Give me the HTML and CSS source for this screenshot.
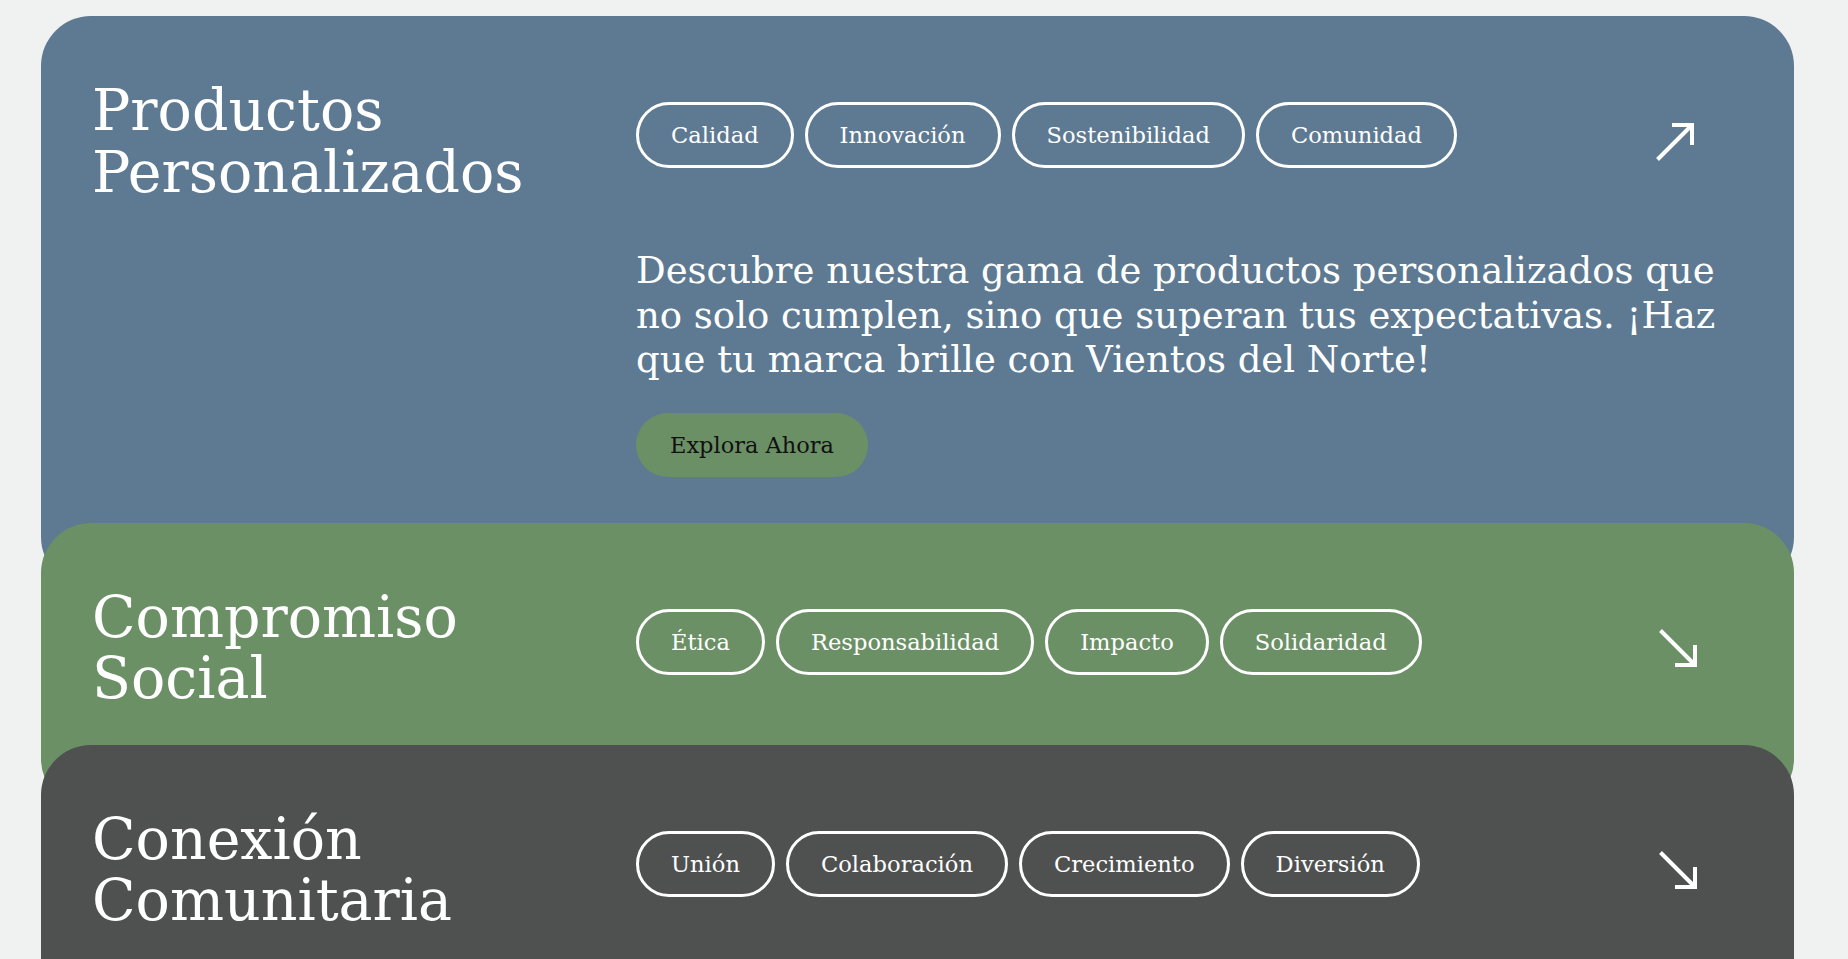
FILE: index.html
```html
<!DOCTYPE html>
<html lang="es">
<head>
<meta charset="utf-8">
<title>Vientos del Norte</title>
<link rel="stylesheet" href="styles.css">
</head>
<body>
<main class="stack">
  <section class="card card-blue">
    <div class="card-grid">
      <h2 class="title">Productos<br>Personalizados</h2>
      <ul class="tags">
        <li class="tag">Calidad</li>
        <li class="tag">Innovación</li>
        <li class="tag">Sostenibilidad</li>
        <li class="tag">Comunidad</li>
      </ul>
      <svg class="arrow" viewBox="0 0 40 40" width="40" height="40" aria-hidden="true"><path d="M2.5 37.5 L36 4 M17 3 H37 V23" fill="none" stroke="#fff" stroke-width="4"/></svg>
      <div class="body">
        <p class="desc">Descubre nuestra gama de productos personalizados que no solo cumplen, sino que superan tus expectativas. ¡Haz que tu marca brille con Vientos del Norte!</p>
        <a class="btn" href="#">Explora Ahora</a>
      </div>
    </div>
  </section>
  <section class="card card-green">
    <div class="card-grid">
      <h2 class="title">Compromiso<br>Social</h2>
      <ul class="tags">
        <li class="tag">Ética</li>
        <li class="tag">Responsabilidad</li>
        <li class="tag">Impacto</li>
        <li class="tag">Solidaridad</li>
      </ul>
      <svg class="arrow arrow-down" viewBox="0 0 40 40" width="40" height="40" aria-hidden="true"><path d="M2.5 37.5 L36 4 M17 3 H37 V23" fill="none" stroke="#fff" stroke-width="4"/></svg>
    </div>
  </section>
  <section class="card card-dark">
    <div class="card-grid">
      <h2 class="title">Conexión<br>Comunitaria</h2>
      <ul class="tags">
        <li class="tag">Unión</li>
        <li class="tag">Colaboración</li>
        <li class="tag">Crecimiento</li>
        <li class="tag">Diversión</li>
      </ul>
      <svg class="arrow arrow-down" viewBox="0 0 40 40" width="40" height="40" aria-hidden="true"><path d="M2.5 37.5 L36 4 M17 3 H37 V23" fill="none" stroke="#fff" stroke-width="4"/></svg>
    </div>
  </section>
</main>
</body>
</html>
```

FILE: styles.css
```css
html, body {
  margin: 0;
  padding: 0;
}

body {
  background: #f0f1f1;
  font-family: "DejaVu Serif", "Liberation Serif", serif;
  color: #ffffff;
  height: 959px;
  overflow: hidden;
}

.stack {
  padding: 16px 54px 0 41px;
}

.card {
  position: relative;
  border-radius: 50px;
  padding: 64px 51px 99px 51px;
}

.card + .card {
  margin-top: -64px;
}

.card-blue { background: #5d7a92; }
.card-green { background: #6b9066; }
.card-dark { background: #4f5150; }

.card-grid {
  display: grid;
  grid-template-columns: 544px 1fr 88px;
  align-items: center;
}

.title {
  margin: 0;
  font-weight: 400;
  font-size: 57px;
  line-height: 61.6px;
}

.tags {
  list-style: none;
  margin: 22px 0 0 0;
  padding: 0;
  display: flex;
  gap: 11px;
  align-self: start;
}

.tag {
  border: 3px solid #ffffff;
  border-radius: 999px;
  padding: 0 32px;
  height: 60px;
  display: flex;
  align-items: center;
  font-size: 22.6px;
  white-space: nowrap;
}

.arrow {
  display: block;
  justify-self: start;
}

.arrow-down {
  transform: rotate(90deg);
  margin-left: 3px;
}

.body {
  grid-column: 2 / 4;
  padding-top: 46px;
  padding-bottom: 11px;
}

.desc {
  margin: 0;
  font-size: 37px;
  line-height: 44.5px;
}

.btn {
  display: inline-block;
  margin-top: 30px;
  background: #6b9066;
  color: #111111;
  text-decoration: none;
  font-size: 22.5px;
  line-height: 34px;
  padding: 15px 34px;
  border-radius: 999px;
}
```
